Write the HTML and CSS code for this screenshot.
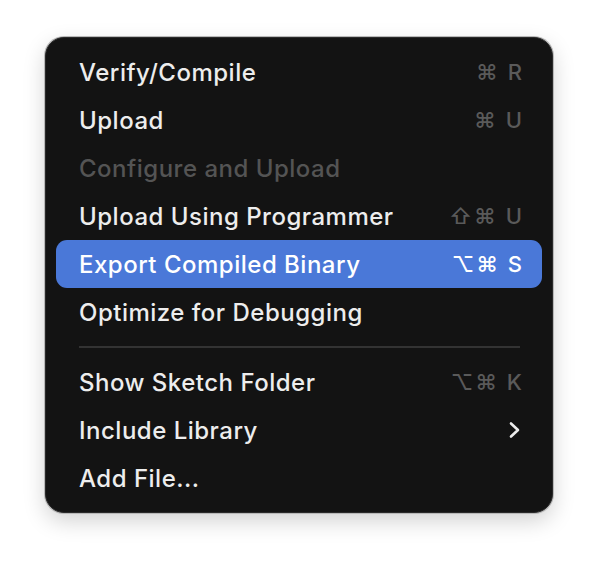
FILE: index.html
```html
<!DOCTYPE html>
<html>
<head>
<meta charset="utf-8">
<link rel="stylesheet" href="styles.css">
</head>
<body>
<div class="stage">
  <div class="menu">
    <div class="item"><span class="label">Verify/Compile</span><span class="key">⌘ R</span></div>
    <div class="item"><span class="label">Upload</span><span class="key">⌘ U</span></div>
    <div class="item disabled"><span class="label">Configure and Upload</span></div>
    <div class="item"><span class="label">Upload Using Programmer</span><span class="key">⇧⌘ U</span></div>
    <div class="item active"><span class="label">Export Compiled Binary</span><span class="key">⌥⌘ S</span></div>
    <div class="item"><span class="label">Optimize for Debugging</span></div>
    <div class="sep"></div>
    <div class="item"><span class="label">Show Sketch Folder</span><span class="key">⌥⌘ K</span></div>
    <div class="item"><span class="label">Include Library</span><svg class="chev" width="14" height="20" viewBox="0 0 14 20"><path d="M4 3.5 L11 10 L4 16.5" fill="none" stroke="#ececec" stroke-width="2.6" stroke-linecap="round" stroke-linejoin="round"/></svg></div>
    <div class="item"><span class="label">Add File...</span></div>
  </div>
</div>
</body>
</html>
```

FILE: styles.css
```css
html, body {
  margin: 0;
  padding: 0;
  background: #ffffff;
}
body {
  width: 598px;
  height: 566px;
  font-family: Inter, "Noto Sans", "Liberation Sans", sans-serif;
}
.stage {
  padding: 37px 0 0 45px;
}
.menu {
  box-sizing: border-box;
  width: 508px;
  height: 476px;
  background: #131313;
  border-radius: 19px;
  border: 1px solid #2a2a2a;
  box-shadow: 0 0 0 1px #b8b8b8, 0 8px 22px rgba(0,0,0,0.18);
  padding: 10px 10px 0 10px;
  display: flex;
  flex-direction: column;
}
.item {
  height: 48px;
  display: flex;
  align-items: center;
  justify-content: space-between;
  padding: 0 20px 0 23px;
  border-radius: 11px;
  color: #ededed;
  font-size: 24px;
  font-weight: 500;
  letter-spacing: 0.5px;
}
.item.disabled { color: #545454; }
.item.active {
  background: #4a78d8;
  color: #ffffff;
}
.key {
  color: #5a5a5a;
  font-size: 22px;
  letter-spacing: 2px;
  margin-right: -2px;
}
.item.active .key { color: #ffffff; }
.chev { margin-right: 1px; }
.sep {
  height: 2px;
  background: #333333;
  margin: 10px 22px 10px 23px;
}
```
